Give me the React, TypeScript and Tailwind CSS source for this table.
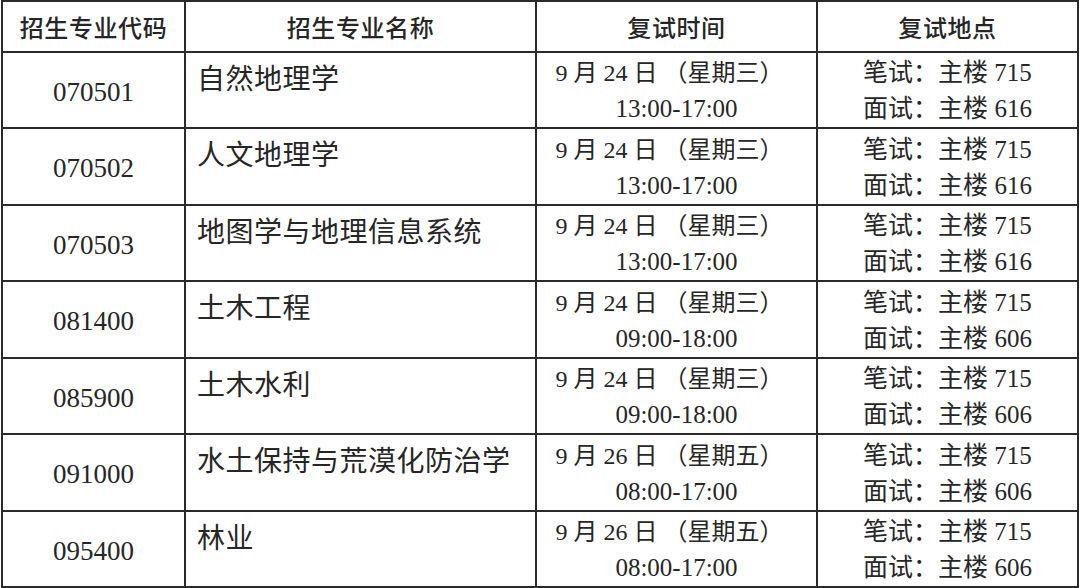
const rows = [
  { code: '070501', name: '自然地理学', date: '9 月 24 日 （星期三）', time: '13:00-17:00', room: '616', h: 'h-[76px]' },
  { code: '070502', name: '人文地理学', date: '9 月 24 日 （星期三）', time: '13:00-17:00', room: '616', h: 'h-[77px]' },
  { code: '070503', name: '地图学与地理信息系统', date: '9 月 24 日 （星期三）', time: '13:00-17:00', room: '616', h: 'h-[76px]' },
  { code: '081400', name: '土木工程', date: '9 月 24 日 （星期三）', time: '09:00-18:00', room: '606', h: 'h-[77px]' },
  { code: '085900', name: '土木水利', date: '9 月 24 日 （星期三）', time: '09:00-18:00', room: '606', h: 'h-[76px]' },
  { code: '091000', name: '水土保持与荒漠化防治学', date: '9 月 26 日 （星期五）', time: '08:00-17:00', room: '606', h: 'h-[77px]' },
  { code: '095400', name: '林业', date: '9 月 26 日 （星期五）', time: '08:00-17:00', room: '606', h: 'h-[76px]' },
];

const serif = "font-['Liberation_Serif','Noto_Sans_CJK_SC',serif]";
const cell = 'border-r-2 border-b-2 border-[#2a2a2a]';

export default function App() {
  return (
    <div className="w-[1080px] h-[588px] bg-white overflow-hidden text-[#262626]">
      <div className="ml-px w-[1078px] border-l-2 border-t-2 border-[#2a2a2a]">
        {/* header */}
        <div className="grid grid-cols-[183px_351px_281px_261px] h-[51px] font-['Noto_Sans_CJK_SC',sans-serif] font-medium text-[24px] tracking-[0.6px]">
          <div className={`${cell} flex items-center justify-center`}>招生专业代码</div>
          <div className={`${cell} flex items-center justify-center`}>招生专业名称</div>
          <div className={`${cell} flex items-center justify-center`}>复试时间</div>
          <div className={`${cell} flex items-center justify-center`}>复试地点</div>
        </div>

        {rows.map((r) => (
          <div key={r.code} className={`grid grid-cols-[183px_351px_281px_261px] ${r.h} ${serif}`}>
            <div className={`${cell} flex items-center justify-center pt-[4px] text-[27px]`}>{r.code}</div>
            <div className={`${cell} pl-[11px] pt-[9px] text-[28px] leading-[36px] tracking-[0.5px]`}>{r.name}</div>
            <div className={`${cell} flex flex-col items-center justify-center text-[24px] leading-[36px] pt-[2px]`}>
              <span className="pr-[14px]">{r.date}</span>
              <span className="text-[25px]">{r.time}</span>
            </div>
            <div className={`${cell} flex flex-col items-center justify-center text-[25px] leading-[36px] pt-[2px]`}>
              <span>笔试：主楼 715</span>
              <span>面试：主楼 {r.room}</span>
            </div>
          </div>
        ))}
      </div>
    </div>
  );
}
